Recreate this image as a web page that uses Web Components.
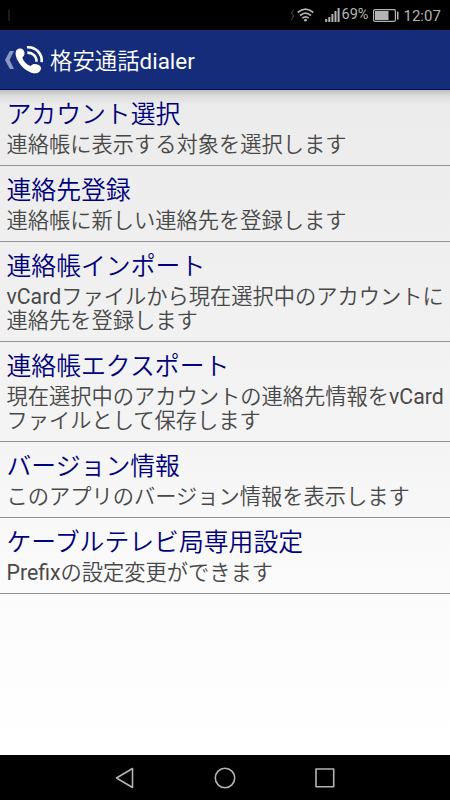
<!DOCTYPE html>
<html lang="ja">
<head>
<meta charset="utf-8">
<title>格安通話dialer</title>
<style>
  body {
    margin: 0;
    font-family: Roboto, "Noto Sans CJK JP", sans-serif;
  }
</style>
</head>
<body>
<dialer-app>
  <status-bar slot="status" battery="69%" time="12:07"></status-bar>
  <title-bar slot="header">格安通話<span>dialer</span></title-bar>
  <setting-item label="アカウント選択">連絡帳に表示する対象を選択します</setting-item>
  <setting-item label="連絡先登録">連絡帳に新しい連絡先を登録します</setting-item>
  <setting-item label="連絡帳インポート" lines="2"><span>vCard</span>ファイルから現在選択中のアカウントに<br>連絡先を登録します</setting-item>
  <setting-item label="連絡帳エクスポート" lines="2">現在選択中のアカウントの連絡先情報を<span>vCard</span><br>ファイルとして保存します</setting-item>
  <setting-item label="バージョン情報">このアプリのバージョン情報を表示します</setting-item>
  <setting-item label="ケーブルテレビ局専用設定"><span>Prefix</span>の設定変更ができます</setting-item>
  <nav-bar slot="nav"></nav-bar>
</dialer-app>

<script>
class DialerApp extends HTMLElement {
  connectedCallback() {
    this.attachShadow({ mode: "open" });
    this.shadowRoot.innerHTML = `
      <style>
        :host {
          display: flex;
          flex-direction: column;
          width: 450px;
          height: 800px;
          overflow: hidden;
        }
        main {
          flex: 1;
          min-height: 0;
          /* header shadow over the page gradient */
          background:
            linear-gradient(rgba(90, 90, 85, .3), rgba(120, 120, 120, .12) 6px, transparent 15px),
            linear-gradient(#ebebeb, #f4f4f4 52%, #fcfcfc 78%, #fff);
        }
      </style>
      <slot name="status"></slot>
      <slot name="header"></slot>
      <main><slot></slot></main>
      <slot name="nav"></slot>
    `;
  }
}

class StatusBar extends HTMLElement {
  connectedCallback() {
    this.attachShadow({ mode: "open" });
    this.shadowRoot.innerHTML = `
      <style>
        :host {
          display: flex;
          align-items: center;
          box-sizing: border-box;
          height: 30px;
          padding: 0 10px 0 8px;
          background: #000;
          color: #b4b4b4;
          font-size: 15px;
          line-height: 30px;
        }
        svg { display: block; flex: none; }
        .tick { width: 2px; height: 11px; background: #1c1c1c; margin-right: auto; }
        .vibe { margin-right: 2px; }
        .wifi { margin-right: 11px; }
        .signal { margin-right: 2px; }
        .percent { font-size: 14.500px; width: 31px; white-space: nowrap; }
        .battery { margin-right: 5px; }
        .time { width: 36.500px; padding-top: 1px; white-space: nowrap; }
      </style>
      <span class="tick"></span>
      <svg class="vibe" width="5" height="12" viewBox="0 0 5 12"><path d="M3.500 1L1.500 4L3.500 7L1.500 11" fill="none" stroke="#3a3a3a" stroke-width="1.200"/></svg>
      <svg class="wifi" width="17" height="14" viewBox="0 0 17 14">
        <g fill="none" stroke="#b4b4b4" stroke-width="1.700">
          <path d="M.7 4.500Q8.500-2.300 16.300 4.500"/>
          <path d="M3 7.500Q8.500 2.700 14 7.500"/>
          <path d="M5.300 10.200Q8.500 7.600 11.700 10.200"/>
        </g>
        <circle cx="8.500" cy="12.200" r="1.400" fill="#b4b4b4"/>
      </svg>
      <svg class="signal" width="15" height="14" viewBox="0 0 15 14">
        <path d="M.2 11h2v3h-2zM3.300 9h2v5h-2zM6.400 6h2v8h-2zM9.500 3h2v11h-2zM12.600 0h2v14h-2z" fill="#b4b4b4"/>
      </svg>
      <span class="percent">${this.getAttribute("battery")}</span>
      <svg class="battery" width="26" height="13" viewBox="0 0 26 13">
        <rect x=".6" y=".6" width="21.800" height="11.800" rx="1.500" fill="none" stroke="#b4b4b4" stroke-width="1.200"/>
        <path d="M2 2h13.500v9H2z" fill="#b4b4b4"/>
        <path d="M24 2.500h1.500v8H24z" fill="#b4b4b4"/>
      </svg>
      <span class="time">${this.getAttribute("time")}</span>
    `;
  }
}

class TitleBar extends HTMLElement {
  connectedCallback() {
    this.attachShadow({ mode: "open" });
    this.shadowRoot.innerHTML = `
      <style>
        :host {
          display: flex;
          align-items: center;
          box-sizing: border-box;
          height: 60px;
          padding-left: 5px;
          background: #142c7a;
          border-bottom: 1px solid #080c50;
          color: #fff;
          font-size: 22.400px;
          font-weight: 350;
          line-height: 34px;
          white-space: nowrap;
        }
        svg { display: block; flex: none; }
        .phone { margin: 0 6px 0 0; }
        .title { padding-top: 2px; }
        ::slotted(span) { font-weight: 400; }
      </style>
      <svg width="9" height="20" viewBox="0 0 9 20"><path d="M4.800 1H9L4.600 10L9 19H4.800L0 10z" fill="#8d99c2"/></svg>
      <svg class="phone" width="30" height="30" viewBox="0 0 30 30">
        <path d="M2.500 5C4 3.300 7 2.800 8.600 4.200C10.600 6 11.100 8.600 10 10.500L8.300 12.700C9.600 16.600 12.700 19.700 16.500 21L18.600 19.400C21 18.500 25.500 19.500 26.900 22.200C27.600 24.500 25.500 27.500 22.600 28.200C18 29.200 10.500 25 6.300 19.500C2.500 14.500.2 8.500 2.500 5z" fill="#fff"/>
        <g fill="none" stroke="#fff" stroke-width="2.600">
          <path d="M13 2.300C21.500 1.700 28.500 8.500 27.700 17.200"/>
          <path d="M13.300 7.600C18.800 7.500 22.700 11.500 22.500 16.700"/>
        </g>
      </svg>
      <span class="title"><slot></slot></span>
    `;
  }
}

class SettingItem extends HTMLElement {
  connectedCallback() {
    this.attachShadow({ mode: "open" });
    this.shadowRoot.innerHTML = `
      <style>
        :host {
          display: block;
          box-sizing: border-box;
          height: 75.800px;
          padding: 9px 0 0 6.500px;
          border-bottom: 1px solid #929292;
          font-weight: 350;
          white-space: nowrap;
        }
        :host([lines="2"]) { height: 100.400px; }
        h2 {
          margin: 0;
          color: #00007c;
          font-size: 24.850px;
          font-weight: inherit;
          line-height: 32px;
        }
        p {
          margin: 2px 0 0;
          color: #484848;
          font-size: 21.250px;
          line-height: 24.500px;
        }
        ::slotted(span) { font-weight: 400; }
      </style>
      <h2>${this.getAttribute("label")}</h2>
      <p><slot></slot></p>
    `;
  }
}

class NavBar extends HTMLElement {
  connectedCallback() {
    this.attachShadow({ mode: "open" });
    this.shadowRoot.innerHTML = `
      <style>
        :host {
          display: flex;
          justify-content: center;
          align-items: center;
          gap: 78px;
          height: 45px;
          background: #000;
        }
        svg { display: block; fill: none; stroke: #b4b4b4; stroke-width: 1.600; stroke-linejoin: round; }
      </style>
      <svg width="22" height="22" viewBox="0 0 22 22"><path d="M18.500 1.500v19L2.500 11z"/></svg>
      <svg width="22" height="22" viewBox="0 0 22 22"><circle cx="11" cy="11" r="9.700"/></svg>
      <svg width="22" height="22" viewBox="0 0 22 22"><path d="M2 2h17.700v17.700H2z"/></svg>
    `;
  }
}

customElements.define("dialer-app", DialerApp);
customElements.define("status-bar", StatusBar);
customElements.define("title-bar", TitleBar);
customElements.define("setting-item", SettingItem);
customElements.define("nav-bar", NavBar);
</script>
</body>
</html>
